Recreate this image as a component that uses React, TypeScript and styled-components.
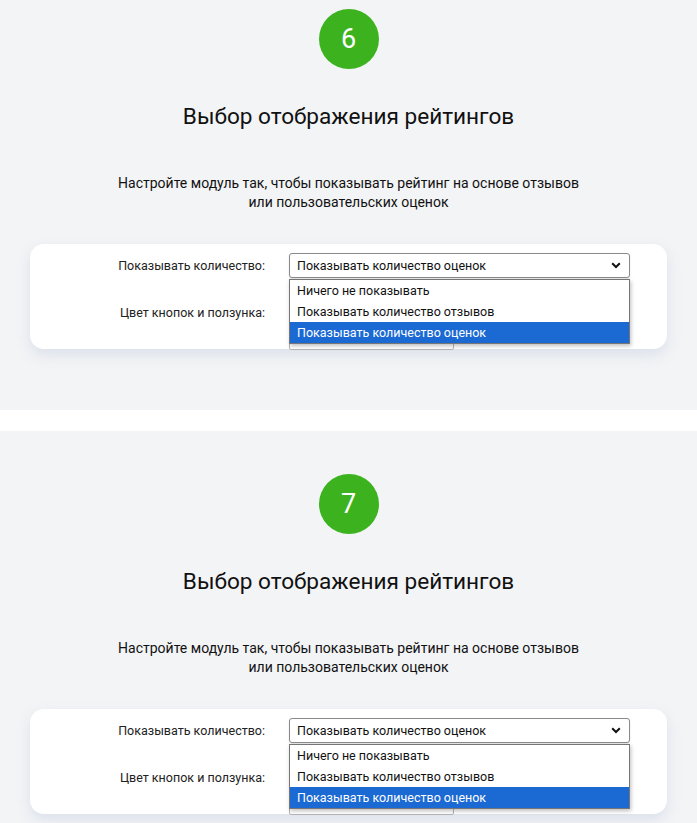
import React from "react";
import styled, { createGlobalStyle } from "styled-components";

const GlobalStyle = createGlobalStyle`
  html, body {
    margin: 0;
    padding: 0;
    background: #ffffff;
    font-family: Roboto, "Liberation Sans", Arial, sans-serif;
    color: #111;
  }
`;

const Page = styled.div`
  margin-top: -34px;
  display: flex;
  flex-direction: column;
  gap: 21px;
`;

const Section = styled.section`
  height: 444px;
  box-sizing: border-box;
  padding-top: 43px;
  background: #f3f4f6;
  display: flex;
  flex-direction: column;
  align-items: center;
`;

const StepBadge = styled.div`
  width: 60px;
  height: 60px;
  border-radius: 50%;
  background: #3cb31e;
  color: #fff;
  font-size: 27px;
  font-weight: 400;
  display: flex;
  align-items: center;
  justify-content: center;
`;

const Title = styled.h2`
  margin: 35px 0 0;
  font-size: 22.6px;
  line-height: 26px;
  font-weight: 400;
  color: #111;
`;

const Description = styled.p`
  margin: 44px 0 0;
  font-size: 14px;
  line-height: 19px;
  text-align: center;
  color: #111;
`;

const Card = styled.div`
  align-self: stretch;
  margin: 32px 30px 0;
  height: 105px;
  box-sizing: border-box;
  padding-top: 9px;
  background: #fff;
  border-radius: 14px;
  box-shadow: 0 6px 14px rgba(190, 202, 220, 0.45);
  display: grid;
  grid-template-columns: 235px 341px;
  column-gap: 24px;
  row-gap: 18px;
  align-content: start;
`;

const Label = styled.div<{ $offset?: number }>`
  text-align: right;
  font-size: 12.5px;
  line-height: 17px;
  color: #222;
  padding-top: ${(p) => p.$offset ?? 4}px;
`;

const SelectWrap = styled.div`
  position: relative;
  z-index: 2;
`;

const SelectBox = styled.div`
  height: 25px;
  box-sizing: border-box;
  border: 1px solid #8a8a8a;
  border-radius: 3px;
  background: #fff;
  box-shadow: 0 1px 2px rgba(0, 0, 0, 0.12);
  display: flex;
  align-items: center;
  justify-content: space-between;
  padding: 0 8px 0 7px;
  font-size: 12.5px;
  color: #111;
`;

const DropList = styled.ul`
  position: absolute;
  top: 26px;
  left: 0;
  width: 100%;
  box-sizing: border-box;
  margin: 0;
  padding: 0;
  list-style: none;
  background: #fff;
  border: 1px solid #767676;
  box-shadow: 1px 2px 4px rgba(0, 0, 0, 0.25);
`;

const Option = styled.li<{ $selected?: boolean }>`
  height: 21px;
  line-height: 21px;
  padding-left: 7px;
  font-size: 12.5px;
  background: ${(p) => (p.$selected ? "#1b69d3" : "#fff")};
  color: ${(p) => (p.$selected ? "#fff" : "#111")};
`;

const ColorField = styled.div`
  width: 165px;
  height: 54px;
  box-sizing: border-box;
  border: 1px solid #b5b5b5;
  border-radius: 2px;
  background: #fff;
`;

const Chevron = () => (
  <svg width="10" height="7" viewBox="0 0 10 7">
    <path d="M1.2 1.3 L5 5 L8.8 1.3" fill="none" stroke="#111" strokeWidth="2" />
  </svg>
);

const options = [
  "Ничего не показывать",
  "Показывать количество отзывов",
  "Показывать количество оценок",
];

const Step: React.FC<{ nr: number }> = ({ nr }) => (
  <Section>
    <StepBadge>{nr}</StepBadge>
    <Title>Выбор отображения рейтингов</Title>
    <Description>
      Настройте модуль так, чтобы показывать рейтинг на основе отзывов
      <br />
      или пользовательских оценок
    </Description>
    <Card>
      <Label>Показывать количество:</Label>
      <SelectWrap>
        <SelectBox>
          <span>Показывать количество оценок</span>
          <Chevron />
        </SelectBox>
        <DropList>
          {options.map((o, i) => (
            <Option key={o} $selected={i === 2}>
              {o}
            </Option>
          ))}
        </DropList>
      </SelectWrap>
      <Label $offset={8}>Цвет кнопок и ползунка:</Label>
      <ColorField />
    </Card>
  </Section>
);

export default function App() {
  return (
    <>
      <GlobalStyle />
      <Page>
        <Step nr={6} />
        <Step nr={7} />
      </Page>
    </>
  );
}
